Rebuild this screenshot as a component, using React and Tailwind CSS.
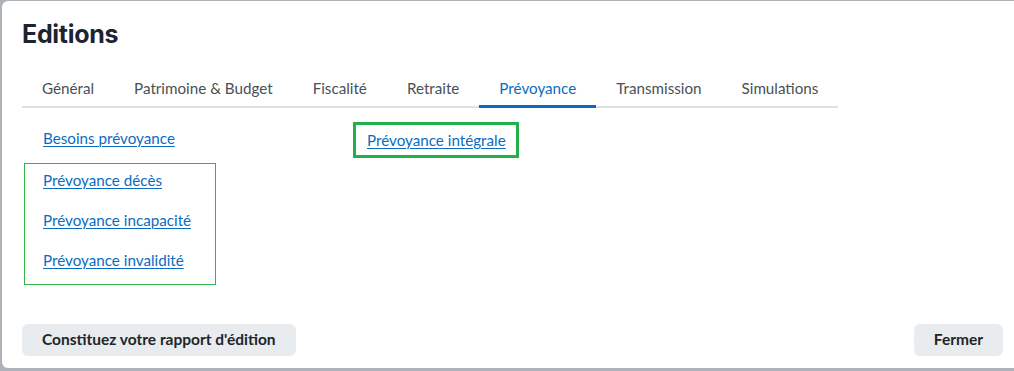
import React, { useState } from 'react';

const tabs = ['Général', 'Patrimoine & Budget', 'Fiscalité', 'Retraite', 'Prévoyance', 'Transmission', 'Simulations'];

const LinkRow = ({ children, className = 'h-10' }) => (
    <div className={`${className} flex items-center`}>
        <a href="#" className="text-[#0b6cbf] underline underline-offset-2 decoration-1">{children}</a>
    </div>
);

const App = () => {
    const [active, setActive] = useState('Prévoyance');

    return (
        <div className="h-[371px] w-[1014px] overflow-hidden bg-[#aeb3ba] pl-[2px] pt-[1px] pb-[3px] flex" style={{ fontFamily: 'Lato, "Noto Sans", sans-serif' }}>
            <div className="flex-1 -mr-3 bg-white rounded-md flex flex-col pl-5 pr-[23px] pt-[17px] pb-3 text-[15.2px]">
                <h2 className="text-[25px] leading-8 font-bold text-[#1d2330] tracking-[-0.3px]" style={{ fontFamily: 'Inter, sans-serif' }}>Editions</h2>
                <div className="mt-[21px] self-start flex border-b-2 border-[#dee2e6]">
                    {tabs.map(t => (
                        <button
                            key={t}
                            onClick={() => setActive(t)}
                            className={`px-5 pt-[7px] pb-[7px] leading-5 -mb-[2px] border-b-[3px] ${t === active ? 'border-[#0b6cbf] text-[#0b6cbf]' : 'border-transparent text-[#495057]'}`}
                        >
                            {t}
                        </button>
                    ))}
                </div>
                <div className="mt-[10px] flex flex-1 items-start">
                    <div className="ml-[2px] w-[192px] flex flex-col">
                        <div className="pl-[19px]"><LinkRow>Besoins prévoyance</LinkRow></div>
                        <div className="mt-[5px] border border-[#2cb64c] pl-[18px] pb-2 flex flex-col gap-2">
                            <LinkRow className="h-8">Prévoyance décès</LinkRow>
                            <LinkRow className="h-8">Prévoyance incapacité</LinkRow>
                            <LinkRow className="h-8">Prévoyance invalidité</LinkRow>
                        </div>
                    </div>
                    <div className="ml-[137px] mt-[4px] border-[3px] border-[#22b04b] h-9 pl-[11px] pr-[10px] flex items-center">
                        <a href="#" className="text-[#0b6cbf] underline underline-offset-2 decoration-1">Prévoyance intégrale</a>
                    </div>
                </div>
                <div className="flex justify-between items-center text-[15.5px]">
                    <button className="h-8 px-5 rounded-md bg-[#e9ecef] font-bold text-[#212529]">Constituez votre rapport d'édition</button>
                    <button className="h-8 px-5 rounded-md bg-[#e9ecef] font-bold text-[#212529]">Fermer</button>
                </div>
            </div>
        </div>
    );
};

export default App;
